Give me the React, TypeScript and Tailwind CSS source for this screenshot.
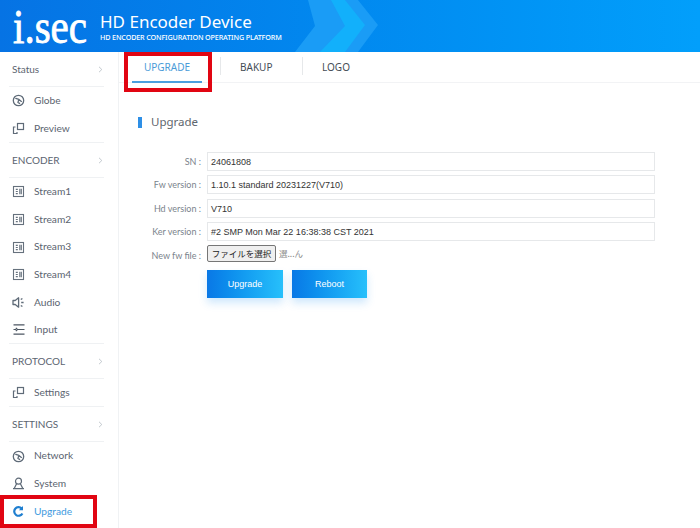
import React from "react";

const ui = "font-['Noto_Sans','Open_Sans',sans-serif]";

function GlobeIcon() {
  return (
    <svg width="13" height="13" viewBox="0 0 13 13" fill="none" stroke="#5f6b78" strokeWidth="1.3">
      <circle cx="6.5" cy="6.5" r="5.2" />
      <path d="M3.8 4.4 L6.8 5.4 L9.4 7.4 M6.8 5.4 L6 8.4 L7.6 9.4" strokeLinecap="round" />
    </svg>
  );
}
function PreviewIcon() {
  return (
    <svg width="13" height="13" viewBox="0 0 13 13" fill="none" stroke="#5f6b78" strokeWidth="1.2">
      <rect x="5.5" y="1.5" width="6" height="6" />
      <path d="M3.5 5 H1.5 V11.5 H5 V10" />
    </svg>
  );
}
function StreamIcon() {
  return (
    <svg width="13" height="13" viewBox="0 0 13 13" fill="none" stroke="#66717d" strokeWidth="1.1">
      <rect x="1.5" y="1.5" width="10" height="10" />
      <path d="M3.8 4.4 H5.8 M3.8 6.5 H5.8 M3.8 8.6 H5.8 M7.8 3.8 V9.2 M9.3 3.8 V9.2" />
    </svg>
  );
}
function AudioIcon() {
  return (
    <svg width="13" height="13" viewBox="0 0 13 13" fill="none" stroke="#5f6b78" strokeWidth="1.3">
      <path d="M1 4.5 H3.2 L6.6 1.8 V11.2 L3.2 8.5 H1 Z" strokeLinejoin="round" />
      <path d="M8.8 3.6 L10.4 2.4 M9.2 6.5 H11.6 M8.8 9.4 L10.4 10.6" />
    </svg>
  );
}
function InputIcon() {
  return (
    <svg width="14" height="13" viewBox="0 0 14 13" fill="none" stroke="#4c5662" strokeWidth="1.2">
      <path d="M1.5 1.8 H12.5 M1.5 11.2 H12.5 M5 6.5 H12.5 M3.8 4.8 L5.5 6.5 L3.8 8.2 M1.5 6.5 H4" />
    </svg>
  );
}
function SystemIcon() {
  return (
    <svg width="13" height="13" viewBox="0 0 13 13" fill="none" stroke="#5f6b78" strokeWidth="1.2">
      <circle cx="6.5" cy="4.2" r="3" />
      <path d="M4.6 6.8 L2.2 11.5 H10.8 L8.4 6.8 M1 11.7 H12" />
    </svg>
  );
}
function RefreshIcon() {
  return (
    <svg width="13" height="13" viewBox="0 0 13 13" fill="none" stroke="#1f7fd0" strokeWidth="2.2">
      <path d="M10.4 8.4 A4.3 4.3 0 1 1 9.6 3.4" />
      <path d="M11 1 V5.2 H6.9 Z" fill="#1f7fd0" stroke="none" />
    </svg>
  );
}
function Chevron() {
  return (
    <svg width="5" height="7" viewBox="0 0 5 7" fill="none" stroke="#b4bbc2" strokeWidth="0.8">
      <path d="M1 0.8 L3.8 3.5 L1 6.2" />
    </svg>
  );
}

function GroupHead({ label }: { label: string }) {
  return (
    <div className="ml-[9px] mr-[14px] flex h-[35px] items-center justify-between border-b border-[#eff1f3] pl-[3px] pr-[1px] pt-[1px]">
      <span className="font-['Lato',sans-serif] text-[10px] text-[#5b6470]">{label}</span>
      <Chevron />
    </div>
  );
}

function Item({ icon, label, active, bordered }: { icon: React.ReactNode; label: string; active?: boolean; bordered?: boolean }) {
  return (
    <div className={`ml-[9px] mr-[14px] flex h-[27.8px] items-center ${bordered ? "border-b border-[#eff1f3]" : ""}`}>
      <span className="ml-[3px] flex w-[22px] items-center">{icon}</span>
      <span className={`font-['Lato',sans-serif] text-[10.2px] ${active ? "text-[#3f9be0]" : "text-[#5b6470]"}`}>{label}</span>
    </div>
  );
}

function Field({ label, value }: { label: string; value: string }) {
  return (
    <div className="flex h-[23.3px] items-start">
      <label className="w-[69px] pr-[6px] text-right font-['Lato',sans-serif] text-[9px] leading-[20px] text-[#7a838c]">{label}</label>
      <div className="h-[19px] w-[448px] border border-[#e6e8ea] bg-white pl-[3px] font-['Liberation_Sans',Arial,sans-serif] text-[9px] leading-[18px] text-[#333]">
        {value}
      </div>
    </div>
  );
}

export default function App() {
  return (
    <div className={`${ui} relative h-[528px] w-[700px] overflow-hidden bg-white`}>
      <header className="relative flex h-[52px] items-start overflow-hidden bg-gradient-to-r from-[#0673e4] to-[#029ffb]">
        <svg className="absolute left-0 top-0" width="700" height="52" viewBox="0 0 700 52">
          <polygon points="308,0 358,0 378,25 358,52 295,52 315,26" fill="#1a9cf6" />
          <polygon points="331,0 345,0 365,25 345,52 320,52 345,26" fill="#12b0fb" />
        </svg>
        <div className="relative ml-[13px] mt-[10px] h-[40px] shrink-0 origin-bottom scale-y-[1.2] whitespace-nowrap font-['Liberation_Serif',serif] text-[41px] font-normal leading-[40px] text-white [-webkit-text-stroke:0.7px_white]">
          i.sec
        </div>
        <div className="relative ml-[13px] mt-[10px] text-white">
          <div className="text-[17px] leading-[23px]">HD Encoder Device</div>
          <div className="text-[7.2px] font-medium leading-[8px] tracking-[-0.02em]">HD ENCODER CONFIGURATION OPERATING PLATFORM</div>
        </div>
      </header>

      <div className="flex h-[476px]">
        <aside className="h-full w-[119px] shrink-0 border-r border-[#f0f2f4]">
          <GroupHead label="Status" />
          <Item icon={<GlobeIcon />} label="Globe" />
          <Item icon={<PreviewIcon />} label="Preview" bordered />
          <GroupHead label="ENCODER" />
          <Item icon={<StreamIcon />} label="Stream1" />
          <Item icon={<StreamIcon />} label="Stream2" />
          <Item icon={<StreamIcon />} label="Stream3" />
          <Item icon={<StreamIcon />} label="Stream4" />
          <Item icon={<AudioIcon />} label="Audio" />
          <Item icon={<InputIcon />} label="Input" bordered />
          <GroupHead label="PROTOCOL" />
          <Item icon={<PreviewIcon />} label="Settings" bordered />
          <GroupHead label="SETTINGS" />
          <Item icon={<GlobeIcon />} label="Network" />
          <Item icon={<SystemIcon />} label="System" />
          <Item icon={<RefreshIcon />} label="Upgrade" active />
        </aside>

        <main className="min-w-0 flex-1">
          <nav className="flex h-[31px] items-start border-b border-[#f2f3f5] pl-[13px]">
            <div className="flex h-[31px] w-[70px] items-start justify-center border-b-2 border-[#4aa0e0] pt-[8px] text-[10px] leading-[14px] text-[#4a9bd8]">
              UPGRADE
            </div>
            <div className="ml-[18px] mt-[5px] h-[18px] w-px bg-[#e6e8ea]" />
            <div className="w-[81px] pl-[19px] pt-[8px] text-[10px] leading-[14px] text-[#444c55]">BAKUP</div>
            <div className="mt-[5px] h-[18px] w-px bg-[#e6e8ea]" />
            <div className="ml-[19px] pt-[8px] text-[10px] leading-[14px] text-[#444c55]">LOGO</div>
          </nav>

          <div className="pl-[19px] pt-[32px]">
            <div className="flex h-[14px] items-center">
              <span className="h-[11px] w-[4px] bg-[#2e8fe6]" />
              <span className="ml-[9px] text-[11.5px] text-[#5e666e]">Upgrade</span>
            </div>
          </div>

          <div className="pl-[19px] pt-[23px]">
            <Field label="SN :" value="24061808" />
            <Field label="Fw version :" value="1.10.1 standard 20231227(V710)" />
            <Field label="Hd version :" value="V710" />
            <Field label="Ker version :" value="#2 SMP Mon Mar 22 16:38:38 CST 2021" />
            <div className="flex h-[25px] items-start">
              <label className="w-[69px] pr-[6px] text-right font-['Lato',sans-serif] text-[9px] leading-[21px] text-[#7a838c]">New fw file :</label>
              <button className="h-[17px] w-[69px] whitespace-nowrap rounded-[2px] border border-[#767676] bg-[#efefef] p-0 font-['Noto_Sans_CJK_JP',sans-serif] text-[8.5px] leading-[15px] text-[#222]">
                ファイルを選択
              </button>
              <span className="ml-[3px] font-['Noto_Sans_CJK_JP',sans-serif] text-[8.5px] leading-[17px] text-[#8a8a8a]">選...ん</span>
            </div>
            <div className="ml-[69px] flex gap-[9px]">
              <button className="h-[28px] w-[76px] bg-gradient-to-r from-[#0a78e6] to-[#27c0fb] pt-[1px] font-['Liberation_Sans',sans-serif] text-[9px] text-white shadow-[0_5px_8px_rgba(40,150,240,0.22)]">Upgrade</button>
              <button className="h-[28px] w-[75px] bg-gradient-to-r from-[#0a78e6] to-[#27c0fb] pt-[1px] font-['Liberation_Sans',sans-serif] text-[9px] text-white shadow-[0_5px_8px_rgba(40,150,240,0.22)]">Reboot</button>
            </div>
          </div>
        </main>
      </div>

      <div className="pointer-events-none absolute left-[124px] top-[52px] h-[40px] w-[88px] border-[4px] border-[#e10512]" />
      <div className="pointer-events-none absolute left-0 top-[495px] h-[33px] w-[97px] border-[4px] border-[#e10512]" />
    </div>
  );
}
